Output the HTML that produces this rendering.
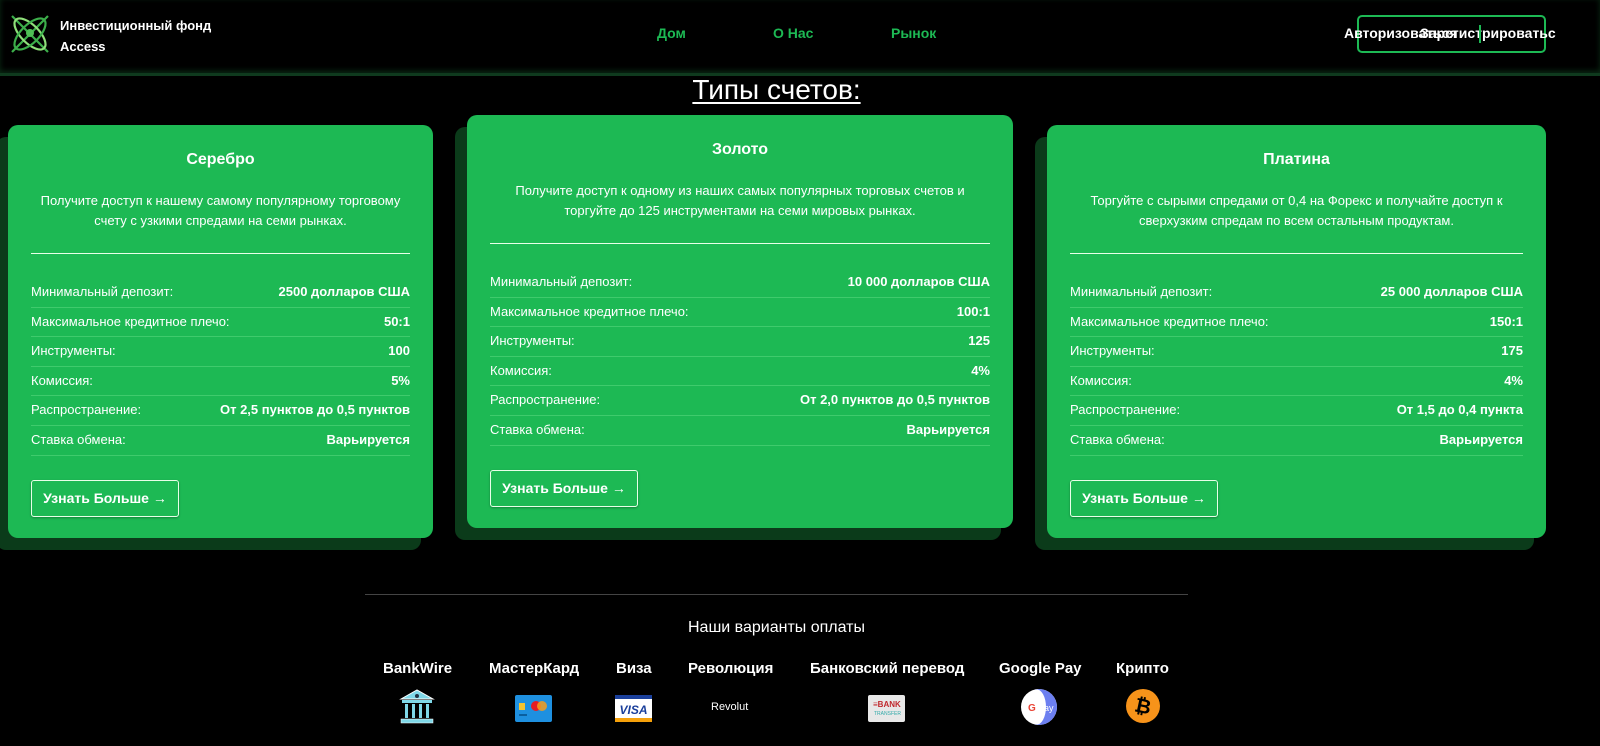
<!DOCTYPE html>
<html><head><meta charset="utf-8"><style>
*{margin:0;padding:0;box-sizing:border-box}
body{width:1600px;height:746px;background:#000;color:#fff;font-family:"Liberation Sans","DejaVu Sans",sans-serif;position:relative;overflow:hidden}
.hdr{position:absolute;left:0;top:0;width:1600px;height:76px;background:#000;border-bottom:3px solid #0f3a1e;box-shadow:0 -2px 6px #0a2a14 inset}
.brand{position:absolute;left:60px;top:15px;font-size:13px;font-weight:bold;line-height:21px}
.nav{position:absolute;top:25px;font-size:14px;font-weight:bold;color:#1db954}
.btn{position:absolute;left:1357px;top:15px;width:189px;height:38px;border:2px solid #1db954;border-radius:5px}
.btxt{position:absolute;top:25px;font-size:14px;font-weight:bold;white-space:nowrap}
h1{position:absolute;left:0;width:1553px;text-align:center;top:74px;font-size:28px;font-weight:normal;text-decoration:underline;text-underline-offset:3px}
.card{position:absolute;background:#1db954;border-radius:10px;padding:0 23px;box-shadow:-12px 12px 0 #0b3b1a}
.card h2{text-align:center;font-size:16px;margin-top:26px;height:20px}
.card .d{text-align:center;font-size:13px;line-height:20px;margin-top:20px;height:42px}
.card hr{border:0;border-top:1px solid #e8ffe8;margin-top:20px}
.rows{margin-top:24px}
.r{display:flex;justify-content:space-between;font-size:13px;height:29.6px;line-height:28px;border-bottom:1px solid #3fcb6c}
.r b{font-weight:bold}
.more{display:inline-block;margin-top:24px;border:1px solid #e8ffe8;border-radius:3px;height:37px;width:148px;text-align:center;line-height:35px;font-size:14px;font-weight:bold;box-shadow:0 1px 2px rgba(0,0,0,.3)}
.fl{position:absolute;left:365px;top:594px;width:823px;border-top:1px solid #444}
.ft{position:absolute;left:0;width:1553px;text-align:center;top:619px;font-size:16px}
.pl{position:absolute;top:660px;font-size:15px;font-weight:bold;text-align:center;white-space:nowrap}
.ic{position:absolute}
</style></head><body>
<div class="hdr">
<svg style="position:absolute;left:8px;top:12px" width="44" height="44" viewBox="0 0 44 44" fill="none" stroke-width="2.2">
<path d="M4 4 L40 40 M40 4 L4 40" stroke="#3cae4a"/>
<ellipse cx="22" cy="22" rx="20" ry="9" transform="rotate(45 22 22)" stroke="#8fe07a"/>
<ellipse cx="22" cy="22" rx="20" ry="9" transform="rotate(-45 22 22)" stroke="#3cae4a"/>
<circle cx="22" cy="21" r="4" fill="#4fbf55" stroke="none"/>
</svg>
<div class="brand">Инвестиционный фонд<br>Access</div>
<div class="nav" style="left:657px">Дом</div>
<div class="nav" style="left:773px">О Нас</div>
<div class="nav" style="left:891px">Рынок</div>
<div class="btn"></div>
<div class="btxt" style="left:1344px">Авторизоваться</div>
<div class="btxt" style="left:1420px">Зарегистрироватьс</div>
<div style="position:absolute;left:1479px;top:25px;width:2px;height:18px;background:#1db954"></div>
</div>
<h1>Типы счетов:</h1>

<div class="card" style="left:8px;top:125px;width:425px;height:413px">
<h2>Серебро</h2>
<div class="d">Получите доступ к нашему самому популярному торговому счету с узкими спредами на семи рынках.</div>
<hr>
<div class="rows">
<div class="r"><span>Минимальный депозит:</span><b>2500 долларов США</b></div>
<div class="r"><span>Максимальное кредитное плечо:</span><b>50:1</b></div>
<div class="r"><span>Инструменты:</span><b>100</b></div>
<div class="r"><span>Комиссия:</span><b>5%</b></div>
<div class="r"><span>Распространение:</span><b>От 2,5 пунктов до 0,5 пунктов</b></div>
<div class="r"><span>Ставка обмена:</span><b>Варьируется</b></div>
</div>
<div class="more">Узнать Больше →</div>
</div>

<div class="card" style="left:467px;top:115px;width:546px;height:413px">
<h2>Золото</h2>
<div class="d">Получите доступ к одному из наших самых популярных торговых счетов и торгуйте до 125 инструментами на семи мировых рынках.</div>
<hr>
<div class="rows">
<div class="r"><span>Минимальный депозит:</span><b>10 000 долларов США</b></div>
<div class="r"><span>Максимальное кредитное плечо:</span><b>100:1</b></div>
<div class="r"><span>Инструменты:</span><b>125</b></div>
<div class="r"><span>Комиссия:</span><b>4%</b></div>
<div class="r"><span>Распространение:</span><b>От 2,0 пунктов до 0,5 пунктов</b></div>
<div class="r"><span>Ставка обмена:</span><b>Варьируется</b></div>
</div>
<div class="more">Узнать Больше →</div>
</div>

<div class="card" style="left:1047px;top:125px;width:499px;height:413px">
<h2>Платина</h2>
<div class="d">Торгуйте с сырыми спредами от 0,4 на Форекс и получайте доступ к сверхузким спредам по всем остальным продуктам.</div>
<hr>
<div class="rows">
<div class="r"><span>Минимальный депозит:</span><b>25 000 долларов США</b></div>
<div class="r"><span>Максимальное кредитное плечо:</span><b>150:1</b></div>
<div class="r"><span>Инструменты:</span><b>175</b></div>
<div class="r"><span>Комиссия:</span><b>4%</b></div>
<div class="r"><span>Распространение:</span><b>От 1,5 до 0,4 пункта</b></div>
<div class="r"><span>Ставка обмена:</span><b>Варьируется</b></div>
</div>
<div class="more">Узнать Больше →</div>
</div>

<div class="fl"></div>
<div class="ft">Наши варианты оплаты</div>
<div class="pl" style="left:383px">BankWire</div>
<div class="pl" style="left:489px">МастерКард</div>
<div class="pl" style="left:616px">Виза</div>
<div class="pl" style="left:688px">Революция</div>
<div class="pl" style="left:810px">Банковский перевод</div>
<div class="pl" style="left:999px">Google Pay</div>
<div class="pl" style="left:1116px">Крипто</div>

<svg class="ic" style="left:398px;top:688px" width="38" height="36" viewBox="0 0 38 36">
<path d="M3 11 L19 2 L35 11 Z" fill="#7fd8e8" stroke="#fff" stroke-width="1"/>
<circle cx="19" cy="8" r="2" fill="#234"/>
<rect x="4" y="12" width="30" height="3" fill="#7fd8e8"/>
<g fill="#7fd8e8"><rect x="7" y="16" width="3" height="14"/><rect x="14" y="16" width="3" height="14"/><rect x="21" y="16" width="3" height="14"/><rect x="28" y="16" width="3" height="14"/></g>
<rect x="3" y="31" width="32" height="4" fill="#7fd8e8" stroke="#fff" stroke-width="0.5"/>
</svg>
<svg class="ic" style="left:515px;top:695px" width="37" height="27" viewBox="0 0 37 27">
<rect width="37" height="27" rx="2" fill="#1e90e0"/>
<rect x="4" y="8" width="6" height="7" fill="#f4c430"/>
<circle cx="21" cy="11" r="5" fill="#e51c23"/><circle cx="27" cy="11" r="5" fill="#f79e1b" opacity=".85"/>
<rect x="4" y="19" width="8" height="2" fill="#0a5fa0"/>
</svg>
<svg class="ic" style="left:615px;top:695px" width="37" height="27" viewBox="0 0 37 27">
<rect width="37" height="27" rx="2" fill="#fff"/><rect y="0" width="37" height="4" fill="#1a3f9b"/><rect y="23" width="37" height="4" fill="#f5a00a"/>
<text x="18.5" y="19" text-anchor="middle" font-family="Liberation Sans" font-weight="bold" font-style="italic" font-size="12" fill="#1a3f9b">VISA</text>
</svg>
<div class="ic" style="left:711px;top:701px;font-size:11px;color:#fff">Revolut</div>
<svg class="ic" style="left:868px;top:695px" width="37" height="27" viewBox="0 0 37 27">
<rect width="37" height="27" rx="2" fill="#e8e8e8"/>
<text x="5" y="12" font-family="Liberation Sans" font-weight="bold" font-size="8" fill="#c0282d">≡BANK</text>
<text x="6" y="20" font-family="Liberation Sans" font-size="5" fill="#3aa">TRANSFER</text>
</svg>
<svg class="ic" style="left:1020px;top:688px" width="38" height="38" viewBox="0 0 38 38">
<circle cx="19" cy="19" r="18" fill="#fff"/><path d="M19 1 A18 18 0 0 1 19 37 L14 37 A18 18 0 0 0 14 1Z" fill="#6c7ff0"/>
<path d="M16 1 A18 18 0 0 1 16 37 A10 18 0 0 0 16 1" fill="#6c7ff0"/>
<text x="8" y="23" font-family="Liberation Sans" font-weight="bold" font-size="10" fill="#ea4335">G</text>
<text x="18" y="23" font-family="Liberation Sans" font-size="9" fill="#fff">Pay</text>
</svg>
<svg class="ic" style="left:1126px;top:689px" width="34" height="34" viewBox="0 0 34 34">
<circle cx="17" cy="17" r="17" fill="#f7931a"/>
<text x="17" y="24" text-anchor="middle" font-family="Liberation Sans" font-weight="bold" font-size="20" fill="#000" transform="rotate(12 17 17)">₿</text>
</svg>
</body></html>
